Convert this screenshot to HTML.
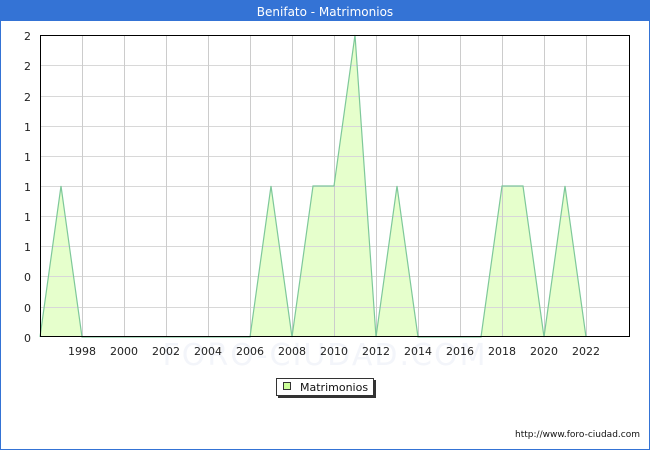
<!DOCTYPE html>
<html><head><style>
body{margin:0;width:650px;height:450px;overflow:hidden;background:#fff;font-family:"DejaVu Sans","Liberation Sans",sans-serif;}
</style></head><body>
<svg width="650" height="450" xmlns="http://www.w3.org/2000/svg" font-family="DejaVu Sans, Liberation Sans, sans-serif">
<rect x="0" y="0" width="650" height="450" fill="#fff"/>
<rect x="0.5" y="0.5" width="649" height="449" fill="none" stroke="#3473d5" stroke-width="1"/>
<rect x="0" y="0" width="650" height="21" fill="#3473d5"/>
<text x="325" y="16" font-size="12" fill="#fff" text-anchor="middle">Benifato - Matrimonios</text>
<text x="325" y="365" font-size="30" fill="#f3f5fa" text-anchor="middle" letter-spacing="2">FORO-CIUDAD.COM</text>
<polygon points="40,337 61,186 82,337 250,337 271,186 292,337 313,186 334,186 355,35 376,337 397,186 418,337 481,337 502,186 523,186 544,337 565,186 586,337" fill="#e6ffcc"/>
<g stroke="#d8d8d8" stroke-width="1">
<line x1="40" y1="65.5" x2="630" y2="65.5"/><line x1="40" y1="96.5" x2="630" y2="96.5"/>
<line x1="40" y1="126.5" x2="630" y2="126.5"/><line x1="40" y1="156.5" x2="630" y2="156.5"/>
<line x1="40" y1="186.5" x2="630" y2="186.5"/><line x1="40" y1="216.5" x2="630" y2="216.5"/>
<line x1="40" y1="246.5" x2="630" y2="246.5"/><line x1="40" y1="276.5" x2="630" y2="276.5"/>
<line x1="40" y1="307.5" x2="630" y2="307.5"/>
</g>
<g stroke="#cccccc" stroke-width="1">
<line x1="82.5" y1="35" x2="82.5" y2="337"/><line x1="124.5" y1="35" x2="124.5" y2="337"/>
<line x1="166.5" y1="35" x2="166.5" y2="337"/><line x1="208.5" y1="35" x2="208.5" y2="337"/>
<line x1="250.5" y1="35" x2="250.5" y2="337"/><line x1="292.5" y1="35" x2="292.5" y2="337"/>
<line x1="334.5" y1="35" x2="334.5" y2="337"/><line x1="376.5" y1="35" x2="376.5" y2="337"/>
<line x1="418.5" y1="35" x2="418.5" y2="337"/><line x1="460.5" y1="35" x2="460.5" y2="337"/>
<line x1="502.5" y1="35" x2="502.5" y2="337"/><line x1="544.5" y1="35" x2="544.5" y2="337"/>
<line x1="586.5" y1="35" x2="586.5" y2="337"/>
</g>
<polyline points="40,337 61,186 82,337 250,337 271,186 292,337 313,186 334,186 355,35 376,337 397,186 418,337 481,337 502,186 523,186 544,337 565,186 586,337" fill="none" stroke="#7ec89a" stroke-width="1.2"/>
<rect x="40.5" y="35.5" width="589" height="301" fill="none" stroke="#000" stroke-width="1"/>
<g font-size="11" fill="#222" text-anchor="end">
<text x="31" y="40">2</text><text x="31" y="70">2</text><text x="31" y="101">2</text>
<text x="31" y="131">1</text><text x="31" y="161">1</text><text x="31" y="191">1</text>
<text x="31" y="221">1</text><text x="31" y="251">1</text><text x="31" y="281">0</text>
<text x="31" y="312">0</text><text x="31" y="342">0</text>
</g>
<g font-size="11" fill="#222" text-anchor="middle">
<text x="82" y="355">1998</text><text x="124" y="355">2000</text><text x="166" y="355">2002</text>
<text x="208" y="355">2004</text><text x="250" y="355">2006</text><text x="292" y="355">2008</text>
<text x="334" y="355">2010</text><text x="376" y="355">2012</text><text x="418" y="355">2014</text>
<text x="460" y="355">2016</text><text x="502" y="355">2018</text><text x="544" y="355">2020</text>
<text x="586" y="355">2022</text>
</g>
<rect x="278" y="380" width="98" height="18" fill="#333"/>
<rect x="276.5" y="378.5" width="97" height="17" fill="#fff" stroke="#333"/>
<rect x="283.5" y="382.5" width="7" height="7" fill="#ccff99" stroke="#333"/>
<text x="300" y="391" font-size="11" fill="#111">Matrimonios</text>
<text x="640" y="437" font-size="9" fill="#111" text-anchor="end">http://www.foro-ciudad.com</text>
</svg>
</body></html>
